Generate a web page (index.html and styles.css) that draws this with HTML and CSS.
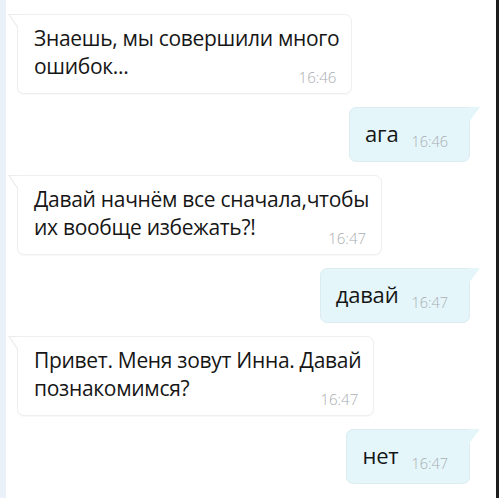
FILE: index.html
```html
<!DOCTYPE html>
<html lang="ru">
<head>
<meta charset="utf-8">
<title>Чат</title>
<link rel="stylesheet" href="styles.css">
</head>
<body>
<div class="chat">
  <div class="row row-in">
    <div class="bubble bubble-in">
      <p class="text">Знаешь, мы совершили много<br>ошибок...</p>
      <span class="time">16:46</span>
    </div>
  </div>
  <div class="row row-out">
    <div class="bubble bubble-out">
      <span class="text-out">ага</span><span class="time time-out">16:46</span>
    </div>
  </div>
  <div class="row row-in">
    <div class="bubble bubble-in">
      <p class="text">Давай начнём все сначала,чтобы<br>их вообще избежать?!</p>
      <span class="time">16:47</span>
    </div>
  </div>
  <div class="row row-out">
    <div class="bubble bubble-out">
      <span class="text-out">давай</span><span class="time time-out">16:47</span>
    </div>
  </div>
  <div class="row row-in">
    <div class="bubble bubble-in">
      <p class="text">Привет. Меня зовут Инна. Давай<br>познакомимся?</p>
      <span class="time">16:47</span>
    </div>
  </div>
  <div class="row row-out">
    <div class="bubble bubble-out">
      <span class="text-out">нет</span><span class="time time-out">16:47</span>
    </div>
  </div>
</div>
</body>
</html>
```

FILE: styles.css
```css
html, body {
  margin: 0;
  padding: 0;
  background: #ffffff;
}

body {
  width: 499px;
  height: 498px;
  overflow: hidden;
  font-family: "Open Sans", "Noto Sans", sans-serif;
  color: #161616;
}

.chat {
  box-sizing: border-box;
  height: 498px;
  display: flex;
  flex-direction: column;
  gap: 13px;
  padding: 14px 26px 0 11px;
  border-left: 6px solid #ebf1f8;
  border-right: 3px solid #1d1d1d;
}

.row {
  display: flex;
}

.row-in {
  justify-content: flex-start;
}

.row-out {
  justify-content: flex-end;
}

.bubble {
  position: relative;
  box-sizing: border-box;
}

.bubble-in {
  display: flex;
  flex-direction: column;
  background: #ffffff;
  border: 1px solid #efefef;
  border-radius: 0 7px 7px 7px;
  padding: 9px 12px 9px 16px;
  box-shadow: 0 1px 1px rgba(0, 0, 0, 0.03);
}

.bubble-in::before {
  content: "";
  position: absolute;
  top: -1px;
  left: -10px;
  width: 10px;
  height: 15px;
  background: #ececec;
  clip-path: polygon(0 0, 100% 0, 100% 100%);
}

.bubble-in::after {
  content: "";
  position: absolute;
  top: 0;
  left: -8px;
  width: 9px;
  height: 13px;
  background: #ffffff;
  clip-path: polygon(0 0, 100% 0, 100% 100%);
}

.text {
  margin: 0;
  font-size: 21px;
  letter-spacing: -0.3px;
  line-height: 28px;
  white-space: nowrap;
}

.time {
  align-self: flex-end;
  margin-top: -10px;
  margin-right: 3px;
  font-size: 15px;
  line-height: 14px;
  font-weight: 300;
  color: #a9adb1;
}

.bubble-out {
  background: #e5f6fb;
  border: 1px solid #dcecf1;
  border-radius: 7px 0 7px 7px;
  padding: 11px 21px 12px 15px;
  font-size: 22px;
  line-height: 28px;
  white-space: nowrap;
}

.bubble-out::after {
  content: "";
  position: absolute;
  top: -1px;
  right: -11px;
  width: 11px;
  height: 15px;
  background: #e5f6fb;
  clip-path: polygon(0 0, 100% 0, 0 100%);
}

.text-out {
  color: #161616;
  letter-spacing: -0.2px;
}

.time-out {
  margin-left: 13px;
  margin-top: 0;
  margin-right: 0;
  font-size: 14.5px;
  vertical-align: -5px;
}
```
